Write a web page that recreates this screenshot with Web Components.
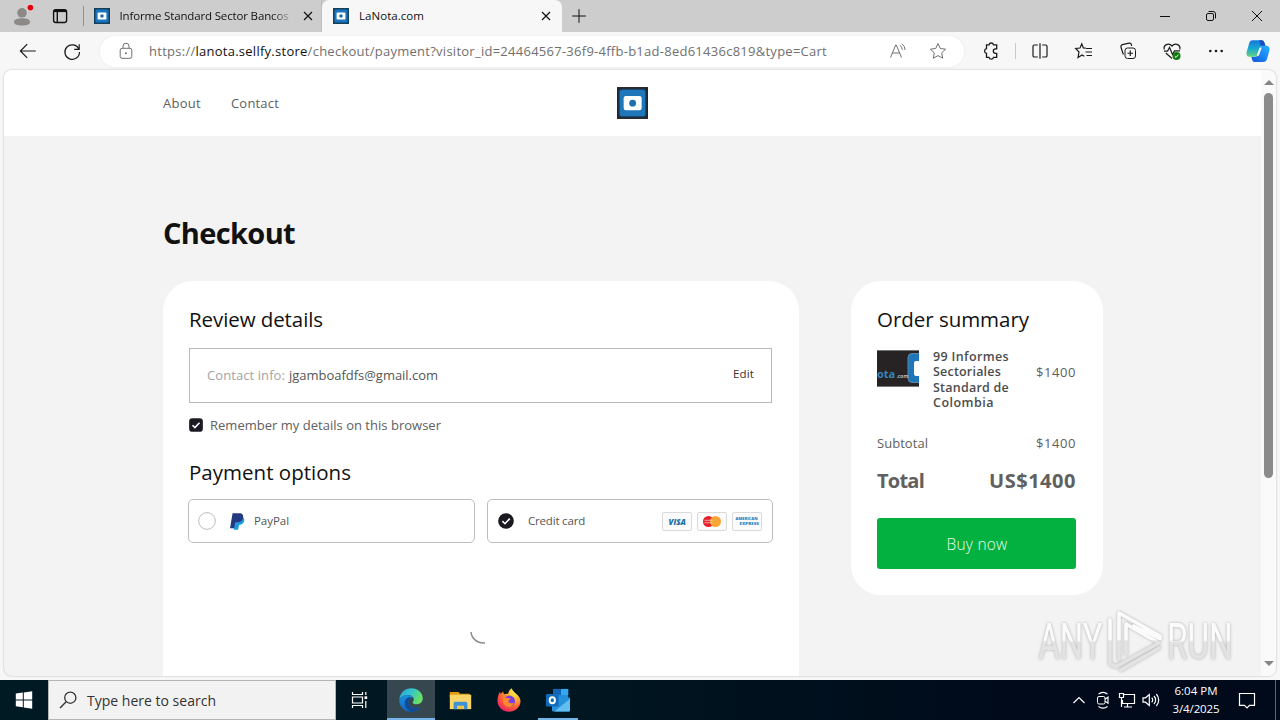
<!DOCTYPE html>
<html lang="en">
<head>
<meta charset="utf-8">
<title>LaNota.com</title>
<style>
  body {
    margin: 0;
    width: 1280px;
    height: 720px;
    overflow: hidden;
    font-family: "Open Sans", "Noto Sans", sans-serif;
    background: #f7f7f7;
  }
</style>
</head>
<body>
<desktop-screen></desktop-screen>

<script>
const ICONS = {
  profile: `<circle cx="10" cy="6" r="6" fill="#8d8987"/><path d="M0 17.500c0-3.500 4.500-4.800 10-4.800s10 1.300 10 4.800-4.500 4.300-10 4.300-10-.8-10-4.300z" fill="#8d8987"/><circle cx="20.500" cy="-.5" r="4.500" fill="#f3d6d6"/><circle cx="20.500" cy="-.5" r="3.600" fill="#e0020c"/>`,
  workspaces: `<rect x="3.600" y="3.700" width="13" height="12.800" rx="2.200" stroke-width="1.400"/><path d="M3.600 5h13" stroke-width="2.200"/><path d="M7.300 6v10" stroke-width="1.400"/>`,
  site: `<rect width="20" height="20" fill="#14405f"/><rect x="1.800" y="1.800" width="16.400" height="16.400" rx="2" fill="#1b75bc"/><rect x="4.500" y="5.500" width="11" height="9" rx="1.500" fill="#fff"/><circle cx="10" cy="10" r="2.200" fill="#1b6aac"/>`,
  logo: `<rect width="20" height="20.600" fill="#2a2425"/><rect x=".9" y=".9" width="18.200" height="18.800" rx="2" fill="#173a58"/><rect x="1.700" y="1.700" width="16.600" height="17.200" rx="1.700" fill="#1f76b8"/><rect x="4.300" y="5.800" width="11.600" height="9.200" rx="1.400" fill="#fff"/><circle cx="10.100" cy="10.400" r="2.200" fill="#1f6fae"/>`,
  close: `<path d="M6 6l8 8M14 6l-8 8" stroke-width="1.200"/>`,
  plus: `<path d="M10 3.200v13.600M3.200 10h13.600"/>`,
  minimize: `<path d="M5 10.500h10"/>`,
  restore: `<rect x="5.500" y="7.500" width="7" height="7" rx="1.500"/><path d="M7.500 5.500h4.500a2.500 2.500 0 0 1 2.500 2.500v4.500"/>`,
  closeWin: `<path d="M5 5l10 10M15 5L5 15"/>`,
  back: `<path d="M17.800 10H2.500M9.200 3.200L2.400 10l6.800 6.800" stroke-width="1.200"/>`,
  refresh: `<path d="M16.900 8.200A7.300 7.300 0 1 0 17.500 11M17.200 3.300v5h-5" stroke-width="1.200"/>`,
  lock: `<rect x="4.200" y="7.300" width="11.600" height="10" rx="1.800"/><path d="M7 7V5.200a3 3 0 0 1 6 0V7"/><circle cx="10" cy="12.300" r="1" fill="currentColor" stroke="none"/>`,
  readAloud: `<path d="M2.500 16.500L7.700 4h.6l5.200 12.500M4.300 12h7.400M12 4.300a6 6 0 0 1 2.300 4.500M13.700 2.700a8.500 8.500 0 0 1 3.500 6.300"/>`,
  star: `<path d="M10 2.600l2.300 4.900 5.300.7-3.900 3.700 1 5.300-4.700-2.600-4.700 2.600 1-5.300-3.900-3.700 5.300-.7z"/>`,
  extension: `<path d="M5.500 3.800H8a2.300 2.300 0 0 1 4.500 0h3.200v4.100h-1.200a2.200 2.200 0 0 0 0 4.400h1.200v4h-3.200a2.300 2.300 0 0 1-4.500 0H5.500v-3.900a2.400 2.400 0 0 1 0-4.700z" stroke-width="1.300"/>`,
  split: `<path d="M7.800 4H4.300A1.300 1.300 0 0 0 3 5.300v9.400A1.300 1.300 0 0 0 4.300 16h3.500M12.200 4h3.500A1.300 1.300 0 0 1 17 5.300v9.400a1.300 1.300 0 0 1-1.300 1.300h-3.500M10 2.200v15.600" stroke-width="1.200"/>`,
  favorites: `<path d="M11.800 7.200L9.300 7 7.800 2.800 6 7l-4.300.5L5 11l-1 5.500 4-2.600 2.300 1.300M12 7.500h6M11.500 11h6.500M12.500 14.500H18" stroke-width="1.200"/>`,
  collections: `<rect x="7" y="7" width="10.500" height="10.500" rx="2.500"/><path d="M12.250 9.500v5.500M9.500 12.250H15M5.300 13.500L3 6.200a2 2 0 0 1 1.400-2.500l6.600-1.500a2 2 0 0 1 2.400 1.400l.3 1.300" stroke-width="1.200"/>`,
  essentials: `<path d="M2.300 8.500C1 4.500 6.500.7 10 5c3.500-4.300 9-.5 7.700 3.500M3.800 12L10 17.500M2 10.200h3.500L7.500 6.500l3 7 2-3.600h5.500" stroke-width="1.200"/><circle cx="14.500" cy="15" r="4" fill="#107c10" stroke="none"/><path d="M12.800 15.300l1.200 1.100 2.300-2.600" stroke="#fff"/>`,
  dots: `<g fill="currentColor" stroke="none"><circle cx="4.300" cy="10" r="1.300"/><circle cx="10" cy="10" r="1.300"/><circle cx="15.700" cy="10" r="1.300"/></g>`,
  copilot: `<defs><linearGradient id="a" x1="0" y1="0" x2="0" y2="1"><stop offset="0" stop-color="#1378dc"/><stop offset=".5" stop-color="#16a8d2"/><stop offset="1" stop-color="#66d37e"/></linearGradient><linearGradient id="b" x1="0" y1="1" x2="1" y2="0"><stop offset="0" stop-color="#1455dd"/><stop offset=".5" stop-color="#1b83f3"/><stop offset="1" stop-color="#28b2f5"/></linearGradient></defs>
    <g stroke="none"><path d="M14.500 19.200H7.700c-1.500 0-2.300-.8-2.700-2.400l-.6-2h3c1.500 0 2.500-.9 3-2.500l1.300-4.200c.5-1.600 1.300-2.400 2.700-2.400H17c2.300 0 3 2 2.500 4l-2 7c-.5 1.700-1.400 2.500-3 2.500z" fill="url(#b)"/><path d="M5.500 1h7.300c1.500 0 2.200 1 2.700 2.500l.7 2.200h-2c-1.600 0-2.500 1.200-3 3l-1.200 3.800c-.4 1.500-1.200 2.300-2.500 2.300H3C.8 14.800.1 13 .5 11L2.600 3.700C3.100 2 3.900 1 5.500 1z" fill="url(#a)"/><path d="M11 1h1.800c1.500 0 2.200 1 2.700 2.500l.7 2.200h-4z" fill="#1a4fc4"/><path d="M11.300 7.300h1.800l-2.400 6.600H8.900z" fill="#f4fbff"/></g>`,
  checkbox: `<rect x=".2" y=".2" width="19.600" height="19.600" rx="4.500" fill="#1d1a24" stroke="none"/><path d="M5 10.300l3.400 3.400 6.600-7" stroke="#fff" stroke-width="2.200"/>`,
  radioOn: `<circle cx="10" cy="10" r="9.800" fill="#1b1a22" stroke="none"/><path d="M5.500 10.200l3.200 3.200 6-6.400" stroke="#fff" stroke-width="2"/>`,
  radioOff: `<circle cx="10" cy="10" r="9.300" stroke="#bdbdbd" stroke-width="1.100"/>`,
  paypal: `<g stroke="none"><path d="M6.500 5h10c2 1.500 1.800 4 .8 6-1.200 2.200-3 3-5.500 3l-1 5.800H5.500z" fill="#1f9bdc"/><path d="M4.200.3h8c3.700 0 5 2.200 4.300 5.300-.8 3.700-3 5.400-6.500 5.400H8.200c-.7 0-1 .4-1.100 1L6 18H1.200z" fill="#243a80"/></g>`,
  spinner: `<path d="M1 1C1.500 7 6.500 12.500 15 12" stroke="#8a8a8a" stroke-width="1.500"/>`,
  start: `<path d="M1.800 3.600l7-1v6.800h-7zM9.800 2.500L18.200 1.300v8.100H9.800zM1.800 10.400h7v6.900l-7-1zM9.800 10.400h8.400v8.300l-8.400-1.200z" fill="#fff" stroke="none"/>`,
  search: `<circle cx="12.300" cy="7.700" r="5.600" stroke-width="1.300"/><path d="M8.200 11.800L2 18" stroke-width="1.400"/>`,
  taskview: `<path d="M2.500 2v2.500h10V2M2.500 7h10v6h-10zM2.500 18v-2.500h10V18M15.800 2v3M15.800 11v7" stroke-width="1.200"/><rect x="14.500" y="6.300" width="2.700" height="2.700" fill="#fff" stroke="none"/>`,
  edge: `<defs><linearGradient id="a" x1="0" y1="0" x2="1" y2=".4"><stop offset="0" stop-color="#2aa5df"/><stop offset=".5" stop-color="#32c4cf"/><stop offset="1" stop-color="#69df65"/></linearGradient><linearGradient id="b" x1="0" y1="0" x2="0" y2="1"><stop offset="0" stop-color="#1a92dc"/><stop offset="1" stop-color="#1166be"/></linearGradient></defs>
    <g stroke="none"><path d="M.3 9.500C.7 4 5 .2 10.300.2c5.500 0 9.500 3.900 9.500 8.300 0 3.300-2.500 5-5.200 5-2 0-3.300-.6-3.300-1.300 0-.6 1-1 1-2.600 0-2-2-3.700-4.800-3.700C4.200 5.900 1.500 7.300.3 9.500z" fill="url(#a)"/><path d="M.3 9.500c1-2.200 3.500-3.600 6.700-3.600 2 0 3.800.7 4.700 2-2.200 0-4 1.600-4 4 0 3.800 4.200 6.300 10 3.800-1.700 2.700-4.500 4.100-7.700 4.100C4.500 19.800-.3 15.300.3 9.500z" fill="url(#b)"/><path d="M6.500 8.500c-1.300 1.300-2 3-1.600 5.200.6 3.400 3.100 5.500 6 6 2.800-.1 5.300-1.600 6.800-4-5.800 2.500-10 0-10-3.800 0-1.900 1.200-3.300 2.800-3.900-1.500-.5-2.900-.3-4 .5z" fill="#114a98"/></g>`,
  explorer: `<g stroke="none"><path d="M.7 2.500h7.500l1.500 1.700H18v3H.7z" fill="#e49b12"/><rect x=".7" y="5" width="18.600" height="12.500" fill="#fbd567"/><path d="M4 17.500v-5c0-.9.600-1.500 1.500-1.500h9c.9 0 1.500.6 1.500 1.500v5h-3v-3H7v3z" fill="#3e92d2"/><rect x="7.500" y="15" width="5" height="2.500" fill="#f4bf3c"/></g>`,
  firefox: `<defs><radialGradient id="a" cx=".75" cy=".15" r=".95"><stop offset="0" stop-color="#fff44f"/><stop offset=".35" stop-color="#ffb02e"/><stop offset=".7" stop-color="#ff5a3a"/><stop offset="1" stop-color="#e81f6d"/></radialGradient></defs>
    <g stroke="none"><path d="M2.500 3.200L3.200 5 5 2.800 5.800 5.300c1.200-.5 2.400-.6 3.500-.4C9.500 3 10.700 1.200 12.400.3c.3 1.800 1.400 2.600 3 4C18 6.300 19.700 8.500 19.600 11c-.2 5-4.300 8.800-9.600 8.800S.5 15.800.4 11C.3 8 1.300 5.200 2.500 3.200z" fill="url(#a)"/><circle cx="10.300" cy="11" r="4.700" fill="#7a3fe0"/><path d="M5.500 8.300c2-.7 3 .2 4.800.3 1.100 0 1.300.7.3 1.200-1.700.7-1.200 2.300.4 2.800 1.300.4 2.600-.1 3-1-.2 3.500-3 5-5.600 4-2.800-1-4.300-4.500-2.900-7.300z" fill="#ff8a2b"/></g>`,
  outlook: `<g stroke="none"><path d="M6 .8h12.500v9H6z" fill="#1e8fe0"/><path d="M6 .8h6.500v5H6z" fill="#1364b5"/><path d="M12.500 .8h6v5h-6z" fill="#36a6ee"/><path d="M5 8h15v10.500a1 1 0 0 1-1 1H6a1 1 0 0 1-1-1z" fill="#2590dc"/><path d="M20 9v9.500a1 1 0 0 1-1 1H7z" fill="#62bdf0"/><rect x="0" y="5" width="10.500" height="10.500" rx="1" fill="#0f6cbd"/></g><ellipse cx="5.250" cy="10.250" rx="2.200" ry="2.500" stroke="#fff" stroke-width="1.600"/>`,
  chevron: `<path d="M4.500 13L10 7.500l5.500 5.500" stroke-width="1.200"/>`,
  meet: `<rect x="4.500" y="6.500" width="7.500" height="7.500" rx="1.500"/><path d="M12 9.200l3-2v6l-3-2M5.500 4.200c2.500-2.500 6.500-2.500 9 0M5.500 16.300c2.500 2.500 6.500 2.500 9 0" stroke-width="1.200"/>`,
  network: `<path d="M7 4.500h10.500v9H5.500V10M10.500 13.500v3.500M7 17h8M2.500 3.500h4v4h-4zM4.500 7.500V17" stroke-width="1.200"/>`,
  volume: `<path d="M2 7.800h2.500L8.300 4.500v11L4.500 12.200H2zM10.700 7.800a3 3 0 0 1 0 4.400M13 6a5.800 5.800 0 0 1 0 8M15.300 4a8.700 8.700 0 0 1 0 12" stroke-width="1.200"/>`,
  notify: `<path d="M2.500 3.500h15v11.800h-5L10 17.800l-2.500-2.500h-5z" stroke-width="1.200"/>`
};

class UiIcon extends HTMLElement {
  connectedCallback() {
    const size = this.getAttribute('size') || 20;
    const h = this.getAttribute('h') || size;
    const box = this.getAttribute('box') || '0 0 20 20';
    this.attachShadow({ mode: 'open' }).innerHTML = `
      <style>
        :host { display: inline-flex; flex: none; width: ${size}px; height: ${h}px; }
        svg { display: block; overflow: visible; }
      </style>
      <svg width="${size}" height="${h}" viewBox="${box}" fill="none" stroke="currentColor">${ICONS[this.getAttribute('name')]}</svg>
    `;
    // artwork made of filled shapes carries no outline
    if (['profile', 'site', 'logo'].includes(this.getAttribute('name'))) {
      this.shadowRoot.querySelector('svg').setAttribute('stroke', 'none');
    }
  }
}

// One line of text tracked to a given width
class FitText extends HTMLElement {
  connectedCallback() {
    this.attachShadow({ mode: 'open' }).innerHTML = `
      <style>
        :host { display: block; flex: none; white-space: nowrap; }
        span { display: inline-block; }
      </style>
      <span><slot></slot></span>
    `;
    const target = Number(this.getAttribute('w'));
    const span = this.shadowRoot.querySelector('span');
    const chars = this.textContent.length;
    const spacing = (target - span.getBoundingClientRect().width) / chars;
    this.style.width = target + 'px';
    this.style.letterSpacing = spacing.toFixed(3) + 'px';
  }
}

class TabStrip extends HTMLElement {
  constructor() {
    super();
    this.attachShadow({ mode: 'open' }).innerHTML = `
      <style>
        :host { display: flex; height: 32px; background: #cdcdcd; color: #111; font-size: 11.5px; }
        .lead { display: flex; width: 84px; align-items: center; padding-left: 14px; gap: 20px; box-sizing: border-box; border-right: 1px solid #8f8f8f; height: 20px; margin-top: 6px; }
        .tab { display: flex; align-items: center; box-sizing: border-box; padding: 0 6px 0 10px; gap: 10px; }
        .tab.idle { width: 238px; border-right: 1px solid #bdbdbd; }
        .tab.idle fit-text { -webkit-mask-image: linear-gradient(90deg, #000 90%, transparent 103%); }
        .tab.idle ui-icon:last-child { margin-right: -1px; }
        .tab.active { width: 240px; padding-left: 11px; background: #f7f7f7; border-radius: 7px 7px 0 0; }
        .tab fit-text { padding-bottom: 1px; }
        .tab ui-icon:last-child { margin-left: auto; }
        .tab.idle { gap: 9.5px; padding-right: 8px; }
        .add { align-self: center; margin-left: 7px; }
        .win { display: flex; margin-left: auto; align-items: center; gap: 26px; padding-right: 13px; }
      </style>
      <div class="lead"><ui-icon name="profile" size="16"></ui-icon><ui-icon name="workspaces"></ui-icon></div>
      <div class="tab idle"><ui-icon name="site" size="16"></ui-icon><fit-text w="169">Informe Standard Sector Bancos</fit-text><ui-icon name="close"></ui-icon></div>
      <div class="tab active"><ui-icon name="site" size="16"></ui-icon><fit-text w="65">LaNota.com</fit-text><ui-icon name="close"></ui-icon></div>
      <ui-icon class="add" name="plus"></ui-icon>
      <div class="win"><ui-icon name="minimize"></ui-icon><ui-icon name="restore"></ui-icon><ui-icon name="closeWin"></ui-icon></div>
    `;
  }
}

class BrowserToolbar extends HTMLElement {
  constructor() {
    super();
    this.attachShadow({ mode: 'open' }).innerHTML = `
      <style>
        :host { display: flex; box-sizing: border-box; height: 38px; padding-left: 6px; align-items: center; background: #f7f7f7; color: #1b1b1b; }
        .cell { display: flex; width: 44px; justify-content: center; flex: none; }
        .address { display: flex; align-items: center; flex: none; box-sizing: border-box; width: 864px; height: 31px; margin: 0 5px 0 6px; padding: 0 16px; border-radius: 16px; background: #fff; color: #707070; font-size: 13px; box-shadow: 0 0 2px #e4e4e4; }
        .address fit-text { margin: 0 61px 0 13px; }
        .address ui-icon:last-child { margin-left: 20px; }
        b { font-weight: 400; color: #111; }
        .rule { width: 1px; height: 16px; margin: 0 2px; background: #c8c8c8; }
        .pilot { width: 40px; }
      </style>
      <div class="cell"><ui-icon name="back"></ui-icon></div>
      <div class="cell"><ui-icon name="refresh"></ui-icon></div>
      <div class="address">
        <ui-icon name="lock"></ui-icon><fit-text w="678">https://<b>lanota.sellfy.store</b>/checkout/payment?visitor_id=24464567-36f9-4ffb-b1ad-8ed61436c819&amp;type=Cart</fit-text>
        <ui-icon name="readAloud"></ui-icon><ui-icon name="star"></ui-icon>
      </div>
      <div class="cell"><ui-icon name="extension"></ui-icon></div>
      <div class="rule"></div>
      <div class="cell"><ui-icon name="split"></ui-icon></div>
      <div class="cell"><ui-icon name="favorites"></ui-icon></div>
      <div class="cell"><ui-icon name="collections"></ui-icon></div>
      <div class="cell"><ui-icon name="essentials"></ui-icon></div>
      <div class="cell"><ui-icon name="dots"></ui-icon></div>
      <div class="cell pilot"><ui-icon name="copilot" size="24"></ui-icon></div>
    `;
  }
}

class StoreHeader extends HTMLElement {
  constructor() {
    super();
    this.attachShadow({ mode: 'open' }).innerHTML = `
      <style>
        :host { display: grid; grid-template-columns: 1fr auto 1fr; align-items: center; height: 66px; padding: 0 159px; background: #fff; color: #606060; font-size: 13px; }
        nav { display: flex; gap: 30px; }
      </style>
      <nav><fit-text w="38">About</fit-text><fit-text w="48">Contact</fit-text></nav>
      <ui-icon name="logo" size="31" h="32" box="0 0 20 20.6"></ui-icon>
    `;
  }
}

class ContentCard extends HTMLElement {
  constructor() {
    super();
    this.attachShadow({ mode: 'open' }).innerHTML = `
      <style>
        :host { display: block; box-sizing: border-box; padding: 25px 26px 26px; border-radius: 30px; background: #fff; }
      </style>
      <slot></slot>
    `;
  }
}

class PaymentOption extends HTMLElement {
  constructor() {
    super();
    this.attachShadow({ mode: 'open' }).innerHTML = `
      <style>
        :host { display: flex; align-items: center; box-sizing: border-box; height: 44px; border: 1px solid #bdbdbd; border-radius: 5px; padding: 0 10px 0 9px; color: #555; font-size: 11.5px; }
        ::slotted(fit-text) { padding-bottom: 2px; }
      </style>
      <slot></slot>
    `;
  }
}

class CardBrand extends HTMLElement {
  connectedCallback() {
    const art = {
      visa: `<text x="6.500" y="12.800" font-size="8.800" font-weight="800" font-style="italic" textLength="17.500" lengthAdjust="spacingAndGlyphs" fill="#1a6fa8">VISA</text>`,
      mastercard: `<circle cx="11.500" cy="9.500" r="5.500" fill="#e5202c"/><circle cx="18.500" cy="9.500" r="5.500" fill="#f9a533"/><path d="M7.500 8.300h8M7.500 10.700h8" stroke="#fbd9cf" stroke-width=".7"/>`,
      amex: `<g font-size="4.200" font-weight="800" fill="#2583bd"><text x="3.500" y="8.300" textLength="22" lengthAdjust="spacingAndGlyphs">AMERICAN</text><text x="7.500" y="13.200" textLength="19.500" lengthAdjust="spacingAndGlyphs">EXPRESS</text></g>`
    };
    this.attachShadow({ mode: 'open' }).innerHTML = `
      <style>
        :host { display: block; box-sizing: border-box; width: 30px; height: 19px; border: 1px solid #dadada; border-radius: 2px; background: #fbfbfb; }
        svg { display: block; margin: -1px; }
      </style>
      <svg width="30" height="19">${art[this.getAttribute('name')]}</svg>
    `;
  }
}

class ReviewPanel extends HTMLElement {
  constructor() {
    super();
    this.attachShadow({ mode: 'open' }).innerHTML = `
      <style>
        :host { display: block; flex: none; width: 636px; }
        content-card { height: 460px; }
        .title { height: 26px; line-height: 26px; font-size: 20.5px; color: #111; }
        .contact { display: flex; align-items: center; box-sizing: border-box; width: 583px; height: 55px; margin-top: 16px; padding: 0 17px 2px; border: 1px solid #b9b9b9; font-size: 13px; color: #555; }
        .contact > :first-child { margin-right: 4px; color: #a3a3a3; }
        .edit { margin-left: auto; font-size: 11.5px; color: #333; padding-bottom: 3px; }
        .remember { display: flex; align-items: center; gap: 7px; height: 20px; margin: 12px 0 24px; font-size: 13px; color: #606060; }
        .options { display: grid; grid-template-columns: 287px 286px; gap: 12px; margin: 14px -1px 0; }
        .brands { display: flex; gap: 5px; margin-left: auto; }
        .wait { display: flex; justify-content: center; margin-top: 88px; padding-right: 7px; }
      </style>
      <content-card>
        <fit-text class="title" w="134">Review details</fit-text>
        <div class="contact">
          <fit-text w="78">Contact info:</fit-text><fit-text w="149">jgamboafdfs@gmail.com</fit-text>
          <fit-text class="edit" w="21">Edit</fit-text>
        </div>
        <div class="remember"><ui-icon name="checkbox" size="14"></ui-icon><fit-text w="231">Remember my details on this browser</fit-text></div>
        <fit-text class="title" w="162">Payment options</fit-text>
        <div class="options">
          <payment-option>
            <ui-icon name="radioOff" size="18"></ui-icon>
            <ui-icon name="paypal" size="17" style="margin:0 8px 0 13px"></ui-icon>
            <fit-text w="35">PayPal</fit-text>
          </payment-option>
          <payment-option>
            <ui-icon name="radioOn" size="16" style="margin:0 14px 0 1px"></ui-icon>
            <fit-text w="57">Credit card</fit-text>
            <div class="brands"><card-brand name="visa"></card-brand><card-brand name="mastercard"></card-brand><card-brand name="amex"></card-brand></div>
          </payment-option>
        </div>
        <div class="wait"><ui-icon name="spinner" size="15" h="13" box="0 0 15 13"></ui-icon></div>
      </content-card>
    `;
  }
}

class OrderSummary extends HTMLElement {
  constructor() {
    super();
    this.attachShadow({ mode: 'open' }).innerHTML = `
      <style>
        :host { display: block; flex: none; width: 252px; color: #606060; font-size: 13px; }
        .title { height: 26px; line-height: 26px; font-size: 20.5px; color: #111; }
        .item { display: flex; margin-top: 16px; width: 199px; height: 63px; }
        .thumb { display: block; margin-top: 2px; }
        .name { flex: 1; margin: 1px 0 0 14px; font-size: 12.500px; line-height: 15.300px; font-weight: 600; color: #4c4c4c; }
        .item > :last-child { margin-top: 15px; }
        .line { display: flex; justify-content: space-between; align-items: center; width: 199px; }
        .sub { height: 20px; margin-top: 22px; }
        .total { height: 30px; margin-top: 12px; font-size: 20px; font-weight: 700; }
        button { display: flex; align-items: center; justify-content: center; width: 199px; height: 51px; margin: 23px 0 0; padding: 0 0 0 1px; box-sizing: border-box; border: 0; border-radius: 3px; background: #02b140; color: #e9fbef; font: 300 15.500px "Open Sans", sans-serif; }
      </style>
      <content-card>
        <fit-text class="title" w="152">Order summary</fit-text>
        <div class="item">
          <svg class="thumb" width="42" height="37">
            <rect width="42" height="37" fill="#272223"/><path d="M0 .5h42M0 36.500h42" stroke="#777"/>
            <rect x="31" y="3.500" width="20" height="29" rx="4" fill="#1f76b8" stroke="#5d87a5"/><rect x="37" y="11" width="12" height="15" rx="2" fill="#fff"/>
            <text x="0" y="28" font-size="11" font-weight="700" fill="#3287bd">ota</text>
            <text x="19.500" y="28" font-size="5" font-weight="600" fill="#ddd">.com</text>
          </svg>
          <div class="name"><fit-text w="76">99 Informes</fit-text><fit-text w="68">Sectoriales</fit-text><fit-text w="76">Standard de</fit-text><fit-text w="61">Colombia</fit-text></div>
          <fit-text w="40">$1400</fit-text>
        </div>
        <div class="line sub"><fit-text w="51">Subtotal</fit-text><fit-text w="40">$1400</fit-text></div>
        <div class="line total"><fit-text w="47">Total</fit-text><fit-text w="87">US$1400</fit-text></div>
        <button><fit-text w="61">Buy now</fit-text></button>
      </content-card>
    `;
  }
}

class PageScrollbar extends HTMLElement {
  constructor() {
    super();
    this.attachShadow({ mode: 'open' }).innerHTML = `
      <style>
        :host { display: flex; flex-direction: column; align-items: center; box-sizing: border-box; width: 15px; padding: 10px 0; background: #fafafa; }
        .up { border: 5px solid transparent; border-top: 0; border-bottom: 5px solid #858585; }
        .down { margin-top: auto; border: 5px solid transparent; border-bottom: 0; border-top: 5px solid #858585; }
        .thumb { width: 9px; height: 385px; margin-top: 8px; border-radius: 5px; background: #8b8b8b; }
      </style>
      <div class="up"></div><div class="thumb"></div><div class="down"></div>
    `;
  }
}

class WaterMark extends HTMLElement {
  constructor() {
    super();
    this.attachShadow({ mode: 'open' }).innerHTML = `
      <style>
        :host { display: block; width: 224px; height: 70px; filter: drop-shadow(0 0 1.5px rgba(0,0,0,.28)); }
        text { font: 400 50px Roboto, sans-serif; }
      </style>
      <svg width="224" height="70">
        <defs>
          <linearGradient id="g" x1="0" y1="0" x2="0" y2="70" gradientUnits="userSpaceOnUse"><stop offset=".48" stop-color="#fbfbfb"/><stop offset=".5" stop-color="#e3e3e3"/></linearGradient>
          <linearGradient id="t" x1="0" y1="-36" x2="0" y2="0" gradientUnits="userSpaceOnUse"><stop offset=".48" stop-color="#fbfbfb"/><stop offset=".53" stop-color="#e3e3e3"/></linearGradient>
        </defs>
        <g fill="url(#t)">
          <text transform="translate(2.500 53) scale(.655 1)">ANY</text>
          <text transform="translate(131 53) scale(.665 1)">RUN</text>
        </g>
        <g fill="none" stroke="url(#g)" stroke-width="3.600" stroke-linejoin="round" stroke-linecap="round">
          <path d="M74 14v44l7 3M83 53V7l41 23v3L98 20"/><path d="M90 48V18l33 19-42 23M85 64l38-22"/>
        </g>
      </svg>
    `;
  }
}

class WebPage extends HTMLElement {
  constructor() {
    super();
    this.attachShadow({ mode: 'open' }).innerHTML = `
      <style>
        :host { display: flex; position: relative; height: 606px; margin: 0 4px; overflow: hidden; border-radius: 8px; background: #f3f3f3; box-shadow: 0 0 2px #aaa; }
        .page { width: 1257px; }
        h1 { margin: 82px 159px 0; height: 32px; line-height: 29px; font-size: 29px; font-weight: 700; color: #111; }
        .columns { display: flex; align-items: flex-start; gap: 52px; margin: 31px 158px 0 159px; }
        water-mark { position: absolute; left: 1032px; top: 536px; }
      </style>
      <div class="page">
        <store-header></store-header>
        <h1><fit-text w="132">Checkout</fit-text></h1>
        <div class="columns"><review-panel></review-panel><order-summary></order-summary></div>
      </div>
      <page-scrollbar></page-scrollbar>
      <water-mark></water-mark>
    `;
  }
}

class TaskBar extends HTMLElement {
  constructor() {
    super();
    this.attachShadow({ mode: 'open' }).innerHTML = `
      <style>
        :host { display: flex; height: 40px; margin-top: 4px; background: linear-gradient(90deg, #001a24, #001620 45%, #000a1a 80%); color: #fff; }
        .app { display: flex; align-items: center; justify-content: center; box-sizing: border-box; width: 48px; height: 40px; }
        .open { background: #37474f; box-shadow: inset 0 -2px #76b5ea; }
        .running { width: 40px; margin: 0 5px; box-shadow: inset 0 -2px #76b5ea; }
        .search { display: flex; align-items: center; box-sizing: border-box; width: 288px; padding-left: 9px; gap: 9px; border: 1px solid #b5b5b5; background: #f2f2f2; color: #333; font-size: 14px; }
        .tray { display: flex; align-items: center; gap: 4px; margin-left: auto; }
        .clock { width: 62px; padding-bottom: 1px; font-size: 11.500px; line-height: 18px; }
        .clock fit-text { margin: 0 auto; }
        .notify { margin: 0 14px 0 6px; }
        .peek { width: 4px; height: 40px; border-left: 1px solid #5a6270; }
      </style>
      <div class="app"><ui-icon name="start"></ui-icon></div>
      <div class="search"><ui-icon name="search"></ui-icon><fit-text w="129">Type here to search</fit-text></div>
      <div class="app"><ui-icon name="taskview"></ui-icon></div>
      <div class="app open" style="margin-left:3px"><ui-icon name="edge" size="24"></ui-icon></div>
      <div class="app" style="margin-left:1px"><ui-icon name="explorer" size="23"></ui-icon></div>
      <div class="app" style="margin-left:1px"><ui-icon name="firefox" size="24"></ui-icon></div>
      <div class="app running"><ui-icon name="outlook" size="24"></ui-icon></div>
      <div class="tray">
        <ui-icon name="chevron"></ui-icon><ui-icon name="meet"></ui-icon><ui-icon name="network"></ui-icon><ui-icon name="volume"></ui-icon>
        <div class="clock"><fit-text w="43">6:04 PM</fit-text><fit-text w="47">3/4/2025</fit-text></div>
        <ui-icon class="notify" name="notify"></ui-icon>
        <div class="peek"></div>
      </div>
    `;
  }
}

class DesktopScreen extends HTMLElement {
  constructor() {
    super();
    this.attachShadow({ mode: 'open' }).innerHTML = `
      <style>
        :host { display: flex; flex-direction: column; width: 1280px; height: 720px; }
        tab-strip, browser-toolbar, web-page, task-bar { flex: none; }
      </style>
      <tab-strip></tab-strip>
      <browser-toolbar></browser-toolbar>
      <web-page></web-page>
      <task-bar></task-bar>
    `;
  }
}

customElements.define('ui-icon', UiIcon);
customElements.define('tab-strip', TabStrip);
customElements.define('browser-toolbar', BrowserToolbar);
customElements.define('store-header', StoreHeader);
customElements.define('content-card', ContentCard);
customElements.define('payment-option', PaymentOption);
customElements.define('card-brand', CardBrand);
customElements.define('review-panel', ReviewPanel);
customElements.define('order-summary', OrderSummary);
customElements.define('page-scrollbar', PageScrollbar);
customElements.define('water-mark', WaterMark);
customElements.define('web-page', WebPage);
customElements.define('task-bar', TaskBar);
customElements.define('desktop-screen', DesktopScreen);
// last, so that the text has its final font when it is measured
customElements.define('fit-text', FitText);
</script>
</body>
</html>
